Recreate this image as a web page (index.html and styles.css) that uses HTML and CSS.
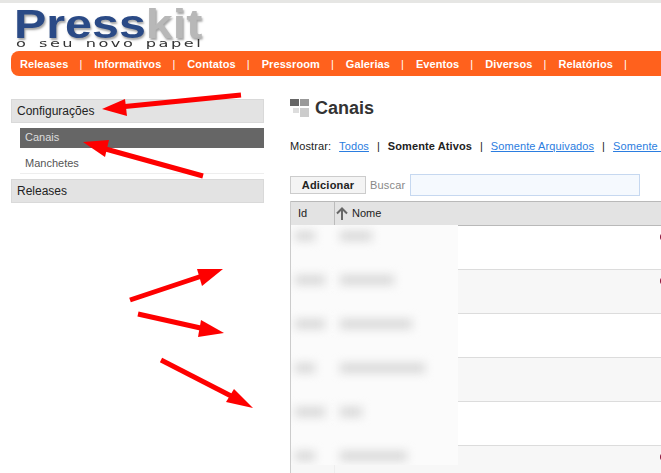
FILE: index.html
```html
<!DOCTYPE html>
<html lang="pt-BR">
<head>
    <meta charset="UTF-8">
    <title>Presskit - Canais</title>
    <link rel="stylesheet" href="styles.css">
</head>
<body>
    <div class="page">
        <div class="logo">
            <div class="logo-name">Press<span class="logo-kit">kit</span></div>
            <div class="logo-tag">o seu novo papel</div>
        </div>

        <ul class="nav">
            <li>Releases</li>
            <li>Informativos</li>
            <li>Contatos</li>
            <li>Pressroom</li>
            <li>Galerias</li>
            <li>Eventos</li>
            <li>Diversos</li>
            <li>Relatórios</li>
        </ul>

        <div class="columns">
            <div class="sidebar">
                <div class="side-title">Configurações</div>
                <div class="side-items">
                    <div class="side-item active">Canais</div>
                    <div class="side-item">Manchetes</div>
                </div>
                <div class="side-title">Releases</div>
            </div>

            <div class="main">
                <div class="heading">
                    <svg class="heading-icon" width="19" height="18" viewBox="0 0 19 18">
                        <rect x="0" y="0" width="9" height="7" fill="#666"/>
                        <rect x="10" y="0" width="9" height="7" fill="#999"/>
                        <rect x="3" y="9" width="6" height="5" fill="#ddd"/>
                        <rect x="10" y="9" width="9" height="9" fill="#ccc"/>
                    </svg>
                    <h1>Canais</h1>
                </div>

                <div class="filter">
                    <span class="filter-label">Mostrar:</span>
                    <a href="#">Todos</a>
                    <span class="sep">|</span>
                    <strong>Somente Ativos</strong>
                    <span class="sep">|</span>
                    <a href="#">Somente Arquivados</a>
                    <span class="sep">|</span>
                    <a href="#">Somente Publicados</a>
                </div>

                <div class="tools">
                    <button>Adicionar</button>
                    <label for="busca">Buscar</label>
                    <input id="busca" type="text">
                </div>

                <div class="table-wrap">
                    <div class="table-head">
                        <div class="col-id">Id</div>
                        <div class="col-name">
                            <svg width="12" height="13" viewBox="0 0 12 13">
                                <path d="M6 13V2M1 6.5L6 1.5L11 6.5" fill="none" stroke="#666" stroke-width="2"/>
                            </svg>
                            Nome
                        </div>
                    </div>
                    <div class="row"><div class="col-id"></div><div class="col-name"><i class="dot"></i></div></div>
                    <div class="row alt"><div class="col-id"></div><div class="col-name"><i class="dot"></i></div></div>
                    <div class="row"><div class="col-id"></div><div class="col-name"></div></div>
                    <div class="row alt"><div class="col-id"></div><div class="col-name"></div></div>
                    <div class="row"><div class="col-id"></div><div class="col-name"></div></div>
                    <div class="row alt"><div class="col-id"></div><div class="col-name"><i class="dot"></i></div></div>

                    <!-- parte borrada do print -->
                    <div class="smudge">
                        <div class="smudge-row"><b class="w1"></b><b class="n1"></b></div>
                        <div class="smudge-row"><b class="w2"></b><b class="n2"></b></div>
                        <div class="smudge-row"><b class="w2"></b><b class="n3"></b></div>
                        <div class="smudge-row"><b class="w1"></b><b class="n4"></b></div>
                        <div class="smudge-row"><b class="w2"></b><b class="n6"></b></div>
                        <div class="smudge-row"><b class="w1"></b><b class="n5"></b></div>
                    </div>
                </div>
            </div>
        </div>

        <svg class="arrows" width="661" height="473" viewBox="0 0 661 473">
            <g stroke="#fe0000" stroke-width="5">
                <line x1="241" y1="95" x2="120" y2="107"/>
                <line x1="203" y1="176" x2="102" y2="148"/>
                <line x1="130" y1="300" x2="205" y2="275"/>
                <line x1="138" y1="314" x2="205" y2="329"/>
                <line x1="161" y1="360" x2="235" y2="398"/>
            </g>
            <g fill="#fe0000">
                <polygon points="102,109 125,99 127,116"/>
                <polygon points="83,142 109,140 105,157"/>
                <polygon points="223,269 197,269 202,286"/>
                <polygon points="224,333 201,320 198,337"/>
                <polygon points="253,408 234,389 226,402"/>
            </g>
        </svg>
    </div>
</body>
</html>
```

FILE: styles.css
```css
* {
    box-sizing: border-box;
}
body {
    margin: 0;
    font-family: "Liberation Sans", Arial, sans-serif;
    font-size: 11px;
    color: #222;
    background: white;
}
.page {
    position: relative;
    width: 661px;
    height: 473px;
    overflow: hidden;
    border-top: 3px solid #e6e6e4;
}

/* logo */
.logo {
    height: 48px;
    padding-left: 14px;
}
.logo-name {
    font-weight: bold;
    font-size: 41px;
    line-height: 30px;
    height: 36px;
    padding-top: 6px;
    color: #2a4a86;
    text-shadow: 1px 2px 2px #a4a4a4;
    filter: blur(0.6px);
    transform: scaleX(1.18);
    transform-origin: left;
}
.logo-kit {
    color: #b8b8b8;
}
.logo-tag {
    font-family: "DejaVu Sans", sans-serif;
    font-size: 11px;
    line-height: 8px;
    letter-spacing: 1.7px;
    word-spacing: 2px;
    color: #333;
    margin: 1px 0 0 2px;
    white-space: nowrap;
    transform: scaleX(1.47);
    transform-origin: left;
}

/* menu */
.nav {
    display: flex;
    list-style: none;
    height: 25px;
    margin: 0 0 0 11px;
    padding: 0 0 0 9px;
    align-items: flex-start;
    background: #ff611d;
    border-radius: 8px 0 0 8px;
    color: white;
    font-weight: bold;
    letter-spacing: 0.08px;
}
.nav li {
    padding-right: 13px;
    margin-right: 13px;
    position: relative;
    height: 25px;
    line-height: 27px;
}
.nav li::after {
    content: "|";
    font-weight: normal;
    position: absolute;
    right: -1px;
    top: 0;
}

.columns {
    display: flex;
    padding: 23px 0 0 11px;
}

/* menu lateral */
.sidebar {
    width: 253px;
    flex: none;
}
.side-title {
    height: 24px;
    line-height: 22px;
    padding-left: 5px;
    font-size: 12px;
    color: #222;
    background: #e3e3e3;
    border: 1px solid #d9d9d9;
}
.side-items {
    margin: 5px 0 5px 9px;
    border-bottom: 1px solid #eee;
}
.side-item {
    height: 25px;
    line-height: 30px;
    padding-left: 5px;
    color: #555;
}
.side-item.active {
    height: 20px;
    line-height: 18px;
    color: #ddd;
    background: #666;
}

/* conteudo */
.main {
    margin-left: 26px;
    width: 500px;
    flex: none;
}
.heading {
    display: flex;
    align-items: center;
    gap: 6px;
    height: 18px;
}
h1 {
    margin: 0;
    font-size: 18px;
    color: #333;
}
.filter {
    margin-top: 22px;
    line-height: 14px;
    white-space: nowrap;
    color: #222;
    letter-spacing: 0.1px;
}
.filter-label {
    margin-right: 5px;
}
.filter a {
    color: #2b7de0;
}
.filter strong {
    color: #222;
}
.sep {
    margin: 0 4.8px;
    color: #222;
}
.tools {
    display: flex;
    align-items: center;
    margin-top: 22px;
    height: 20px;
}
.tools button {
    width: 76px;
    height: 18px;
    padding: 0;
    font: bold 11px "Liberation Sans", Arial, sans-serif;
    letter-spacing: 0.2px;
    color: #222;
    background: #f4f4f4;
    border: 1px solid #ccc;
}
.tools label {
    margin: 0 5px 0 4px;
    color: #888;
    letter-spacing: 0.2px;
}
.tools input {
    width: 230px;
    height: 22px;
    border: 1px solid #c6d8f0;
    background: #f5f9fe;
}

/* tabela */
.table-wrap {
    position: relative;
    margin-top: 6px;
    border-left: 1px solid #ccc;
}
.table-head {
    display: flex;
    height: 25px;
    line-height: 23px;
    background: #e3e3e3;
    border-top: 1px solid #b9b9b9;
    border-bottom: 1px solid #b9b9b9;
}
.col-id {
    width: 44px;
    flex: none;
    padding-left: 7px;
    border-right: 1px solid #bbb;
}
.col-name {
    flex: 1;
    display: flex;
    align-items: center;
    gap: 4px;
    padding-left: 1px;
    position: relative;
}
.row {
    display: flex;
    height: 44px;
    border-bottom: 1px solid #dcdcdc;
}
.row.alt {
    background: #f7f7f7;
}
.row .col-id {
    border-right: 1px solid #eee;
}
.dot {
    position: absolute;
    left: 325px;
    top: 7px;
    width: 8px;
    height: 8px;
    border-radius: 50%;
    background: #8e1239;
}
.smudge {
    position: absolute;
    left: 0;
    top: 24px;
    width: 167px;
    height: 240px;
    background: #fbfbfb;
    overflow: hidden;
}
.smudge-row {
    display: flex;
    height: 44px;
    padding: 6px 0 0 4px;
}
.smudge-row b {
    display: block;
    height: 10px;
    background: #d8d8d8;
    filter: blur(5px);
}
.w1 { width: 20px; margin-right: 25px; }
.w2 { width: 30px; margin-right: 15px; }
.n1 { width: 32px; }
.n2 { width: 54px; }
.n3 { width: 72px; }
.n4 { width: 85px; }
.n5 { width: 67px; }
.n6 { width: 22px; }

.arrows {
    position: absolute;
    left: 0;
    top: -3px;
    pointer-events: none;
}
```
